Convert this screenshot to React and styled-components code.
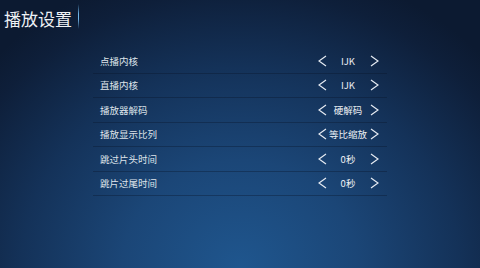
import React from "react";
import styled, { createGlobalStyle } from "styled-components";

const GlobalStyle = createGlobalStyle`
  html, body {
    margin: 0;
    padding: 0;
  }
  body {
    width: 480px;
    height: 268px;
    overflow: hidden;
    font-family: "Noto Sans CJK SC", "Noto Sans", sans-serif;
  }
`;

const settings = [
  { label: "点播内核", value: "IJK" },
  { label: "直播内核", value: "IJK" },
  { label: "播放器解码", value: "硬解码" },
  { label: "播放显示比列", value: "等比缩放" },
  { label: "跳过片头时间", value: "0秒" },
  { label: "跳片过尾时间", value: "0秒" },
];

const Chevron = ({ dir }) => (
  <svg width="9" height="12" viewBox="0 0 9 12">
    <polyline
      points={dir === "left" ? "8,1 1,6 8,11" : "1,1 8,6 1,11"}
      fill="none"
      stroke="#e6ebf2"
      strokeWidth="1.2"
      strokeLinejoin="miter"
    />
  </svg>
);

const App = () => {
  return (
    <Page>
      <GlobalStyle />
      <Header>
        <Title>播放设置</Title>
        <Cursor />
      </Header>
      <List>
        {settings.map((s) => (
          <Row key={s.label}>
            <Label>{s.label}</Label>
            <Picker>
              <Arrow>
                <Chevron dir="left" />
              </Arrow>
              <Value>{s.value}</Value>
              <Arrow>
                <Chevron dir="right" />
              </Arrow>
            </Picker>
          </Row>
        ))}
      </List>
    </Page>
  );
};

export default App;

const Page = styled.div`
  width: 480px;
  height: 268px;
  display: flex;
  flex-direction: column;
  background: radial-gradient(
    ellipse 70% 115% at 50% 100%,
    #1f568e 0%,
    #1b4677 35%,
    #143259 65%,
    #0e1f3a 90%,
    #0c1a31 100%
  );
`;

const Header = styled.div`
  height: 36px;
  display: flex;
  align-items: center;
  padding-left: 4px;
`;

const Title = styled.div`
  font-size: 17px;
  color: #eef1f5;
  letter-spacing: 0;
  line-height: 1;
`;

const Cursor = styled.div`
  width: 1px;
  height: 25px;
  margin-left: 6px;
  margin-top: -3px;
  background: linear-gradient(
    to bottom,
    rgba(90, 160, 220, 0),
    #6fb4e8 40%,
    #6fb4e8 60%,
    rgba(90, 160, 220, 0)
  );
`;

const List = styled.div`
  margin: 13px 0 0 93px;
  width: 294px;
  display: flex;
  flex-direction: column;
`;

const Row = styled.div`
  height: 23.5px;
  display: flex;
  align-items: center;
  justify-content: space-between;
  padding: 0 7px;
  border-bottom: 1px solid rgba(8, 20, 40, 0.35);
`;

const Label = styled.span`
  font-size: 9.5px;
  color: #dfe4ea;
`;

const Picker = styled.div`
  display: flex;
  align-items: center;
`;

const Arrow = styled.div`
  width: 12px;
  display: flex;
  justify-content: center;
`;

const Value = styled.span`
  width: 40px;
  text-align: center;
  font-size: 9.5px;
  color: #eef1f5;
  white-space: nowrap;
`;
